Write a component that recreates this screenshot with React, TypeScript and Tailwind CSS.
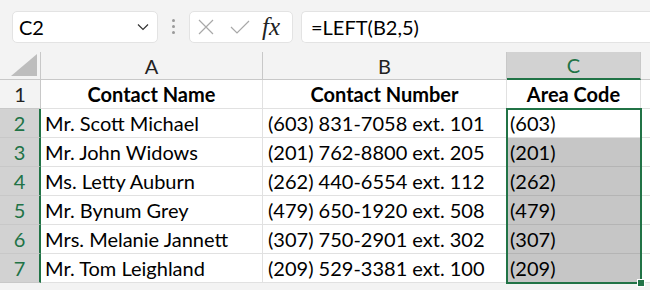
import React from "react";

const rows: [string, string, string][] = [
  ["Mr. Scott Michael", "(603) 831-7058 ext. 101", "(603)"],
  ["Mr. John Widows", "(201) 762-8800 ext. 205", "(201)"],
  ["Ms. Letty Auburn", "(262) 440-6554 ext. 112", "(262)"],
  ["Mr. Bynum Grey", "(479) 650-1920 ext. 508", "(479)"],
  ["Mrs. Melanie Jannett", "(307) 750-2901 ext. 302", "(307)"],
  ["Mr. Tom Leighland", "(209) 529-3381 ext. 100", "(209)"],
];

export default function App() {
  return (
    <div
      className="w-[650px] h-[290px] overflow-hidden bg-[#f3f3f3] text-[#000]"
      style={{ fontFamily: "Lato, 'Liberation Sans', sans-serif" }}
    >
      {/* Formula bar */}
      <div className="h-[52px] flex items-center pl-[12px] pt-[1px]">
        <div className="w-[146px] h-[32px] bg-white rounded-[5px] border border-[#e3e3e3] flex items-center pl-[6px] pr-[8px]">
          <span className="text-[20px] flex-1">C2</span>
          <svg width="12" height="8" viewBox="0 0 12 8">
            <path d="M1 1.5 L6 6.5 L11 1.5" fill="none" stroke="#333" strokeWidth="1.2" />
          </svg>
        </div>
        <div className="w-[31px] flex flex-col items-center gap-[3px]">
          <div className="w-[3px] h-[3px] rounded-full bg-[#9a9a9a]" />
          <div className="w-[3px] h-[3px] rounded-full bg-[#9a9a9a]" />
          <div className="w-[3px] h-[3px] rounded-full bg-[#9a9a9a]" />
        </div>
        <div className="w-[104px] h-[32px] bg-white rounded-[5px] border border-[#e3e3e3] flex items-center pl-[7px] pr-[6px]">
          <svg width="18" height="18" viewBox="0 0 18 18">
            <path d="M2 2 L16 16 M16 2 L2 16" stroke="#a8a8a8" strokeWidth="1.2" fill="none" />
          </svg>
          <svg width="22" height="18" viewBox="0 0 22 18" className="ml-[14px]">
            <path d="M2 9 L8 15 L20 3" stroke="#a8a8a8" strokeWidth="1.2" fill="none" />
          </svg>
          <span
            className="ml-[11px] italic text-[25px] leading-none text-[#222]"
            style={{ fontFamily: "'Liberation Serif', 'DejaVu Serif', serif" }}
          >
            fx
          </span>
        </div>
        <div className="ml-[8px] flex-1 h-[32px] bg-white rounded-l-[5px] border border-r-0 border-[#e3e3e3] flex items-center pl-[9px]">
          <span className="text-[20px]">=LEFT(B2,5)</span>
        </div>
      </div>

      {/* Grid */}
      <div className="relative">
        <div className="grid grid-cols-[41px_222px_244px_134px_9px] grid-rows-[28px_repeat(7,29px)] bg-white text-[20px]">
          {/* Column header row */}
          <div className="relative bg-[#f3f3f3] border-r border-b border-[#c8c8c8]">
            <svg width="26" height="22" viewBox="0 0 26 22" className="absolute right-[3px] bottom-[3px]">
              <path d="M26 0 L26 22 L0 22 Z" fill="#bdbdbd" />
            </svg>
          </div>
          <div className="bg-[#f3f3f3] border-r border-b border-[#c8c8c8] flex items-center justify-center text-[#222]">A</div>
          <div className="bg-[#f3f3f3] border-r border-b border-[#c8c8c8] flex items-center justify-center text-[#222]">B</div>
          <div className="bg-[#d2d2d2] border-r border-[#c8c8c8] border-b-2 border-b-[#217346] flex items-center justify-center text-[#217346]">C</div>
          <div className="bg-[#f3f3f3] border-b border-[#c8c8c8]" />

          {/* Row 1 */}
          <div className="bg-[#f3f3f3] border-r border-b border-[#c8c8c8] flex items-center justify-center text-[#222]">1</div>
          <div className="border-r border-b border-[#e1e1e1] flex items-center justify-center font-bold">Contact Name</div>
          <div className="border-r border-b border-[#e1e1e1] flex items-center justify-center font-bold">Contact Number</div>
          <div className="border-r border-b border-[#e1e1e1] flex items-center justify-center font-bold">Area Code</div>
          <div className="border-b border-[#e1e1e1]" />

          {rows.map((r, i) => (
            <React.Fragment key={i}>
              <div className="bg-[#d2d2d2] border-r-2 border-r-[#217346] border-b border-b-[#c8c8c8] flex items-center justify-center text-[#217346]">
                {i + 2}
              </div>
              <div className="border-r border-b border-[#e1e1e1] flex items-center pl-[4px] whitespace-nowrap">{r[0]}</div>
              <div className="border-r border-b border-[#e1e1e1] flex items-center pl-[5px] whitespace-nowrap">{r[1]}</div>
              <div
                className={
                  i === 0
                    ? "border-r border-b border-[#e1e1e1] flex items-center pl-[3px]"
                    : "bg-[#c6c6c6] border-r border-b border-[#b4b4b4] flex items-center pl-[3px]"
                }
              >
                {r[2]}
              </div>
              <div className="border-b border-[#e1e1e1]" />
            </React.Fragment>
          ))}
        </div>

        {/* Selection outline over C2:C7 */}
        <div className="absolute left-[506px] top-[56px] w-[136px] h-[176px] border-2 border-[#217346] pointer-events-none" />
        {/* Fill handle */}
        <div className="absolute left-[637px] top-[227px] w-[8px] h-[8px] bg-[#217346] border border-white" />
      </div>
    </div>
  );
}
